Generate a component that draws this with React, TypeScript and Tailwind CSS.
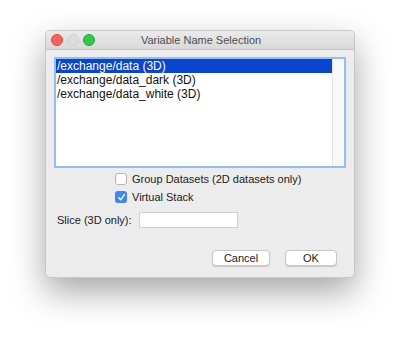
const items = ["/exchange/data (3D)", "/exchange/data_dark (3D)", "/exchange/data_white (3D)"];

const Check = ({ checked }: { checked: boolean }) =>
  checked ? (
    <span className="flex h-[12px] w-[12px] items-center justify-center rounded-[3px] bg-[#3b87f6]">
      <svg width="9" height="9" viewBox="0 0 9 9">
        <path d="M1.8 4.8 L3.7 6.8 L7.3 1.6" fill="none" stroke="white" strokeWidth="1.4" strokeLinecap="round" strokeLinejoin="round" />
      </svg>
    </span>
  ) : (
    <span className="h-[12px] w-[12px] rounded-[3px] border border-[#b5b5b5] bg-white" />
  );

export default function App() {
  return (
    <div
      className="h-[338px] w-[400px] bg-white pl-[45px] pt-[30px]"
      style={{ fontFamily: '"Liberation Sans", Arial, sans-serif' }}
    >
      <div className="flex h-[248px] w-[310px] flex-col overflow-hidden rounded-[5px] border border-[#c8c8c8] bg-[#ececec] shadow-[0_14px_34px_rgba(0,0,0,0.35)]">
        <div className="relative flex h-[19px] shrink-0 items-center border-b border-[#c4c4c4] bg-gradient-to-b from-[#ebebeb] to-[#d9d9d9]">
          <div className="absolute left-[5px] top-[3px] flex gap-[4px]">
            <span className="h-[12px] w-[12px] rounded-full border border-[#e0443e] bg-[#fc605c]" />
            <span className="h-[12px] w-[12px] rounded-full border border-[#cfcfcf] bg-[#dcdcdc]" />
            <span className="h-[12px] w-[12px] rounded-full border border-[#1aab29] bg-[#34c84a]" />
          </div>
          <div className="w-full pl-[2px] text-center text-[11px] leading-[18px] text-[#4d4d4d]">Variable Name Selection</div>
        </div>

        <div className="flex flex-col px-[8px] pt-[7px]">
          <div className="flex h-[111px] shrink-0 rounded-[1px] border-2 border-[#93bff0] bg-white">
            <div className="flex flex-1 flex-col text-[12px] leading-[14px] text-[#111]">
              {items.map((it, i) => (
                <div key={it} className={i === 0 ? "bg-[#0a45d2] pl-[1px] text-white" : "pl-[1px]"}>
                  {it}
                </div>
              ))}
            </div>
            <div className="w-[12px] border-l border-[#e6e6e6] bg-[#f8f8f8]" />
          </div>

          <div className="mt-[4px] flex flex-col gap-[4px] pl-[61px] text-[11px] leading-[14px] text-[#222]">
            <div className="flex h-[14px] items-center gap-[5px]">
              <Check checked={false} />
              <span>Group Datasets (2D datasets only)</span>
            </div>
            <div className="flex h-[14px] items-center gap-[5px]">
              <Check checked={true} />
              <span>Virtual Stack</span>
            </div>
          </div>

          <div className="mt-[8px] flex h-[16px] items-center pl-[3px] text-[11px] text-[#222]">
            <span className="w-[82px]">Slice (3D only):</span>
            <div className="h-[16px] w-[99px] border border-[#cfcfcf] bg-white" />
          </div>

          <div className="mt-[22px] flex justify-end gap-[15px] pr-[9px] text-[11px] text-[#222]">
            <div className="flex h-[16px] w-[58px] items-center justify-center rounded-[4px] border border-[#c6c6c6] bg-white shadow-[0_1px_1px_rgba(0,0,0,0.15)]">
              Cancel
            </div>
            <div className="flex h-[16px] w-[52px] items-center justify-center rounded-[4px] border border-[#c6c6c6] bg-white shadow-[0_1px_1px_rgba(0,0,0,0.15)]">
              OK
            </div>
          </div>
        </div>
      </div>
    </div>
  );
}
